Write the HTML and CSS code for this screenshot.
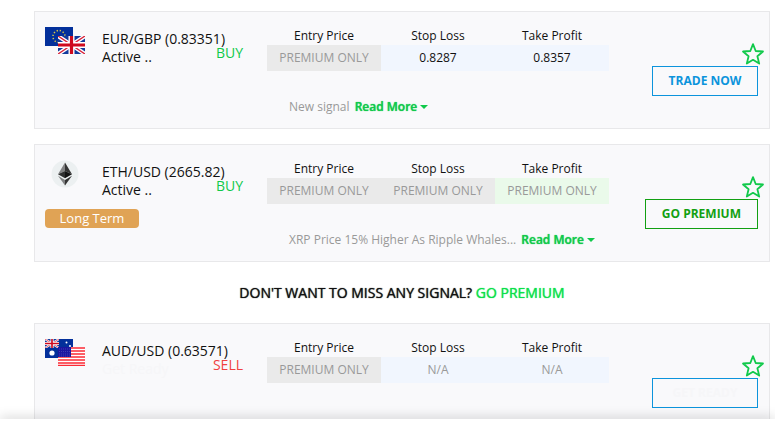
FILE: index.html
```html
<!DOCTYPE html>
<html lang="en">
<head>
    <meta charset="UTF-8">
    <meta name="viewport" content="width=device-width, initial-scale=1.0">
    <title>Forex Signals</title>
    <link rel="stylesheet" href="styles.css">
</head>
<body>
    <!-- shared icons -->
    <svg class="sprite" aria-hidden="true">
        <symbol id="star" viewBox="0 0 24 24">
            <path d="M12 2.2 L14.7 9 L22 9.5 L16.4 14.2 L18.2 21.6 L12 17.8 L5.8 21.6 L7.6 14.2 L2 9.5 L9.3 9 Z" fill="none" stroke="#11c94b" stroke-width="1.8" stroke-linejoin="round"/>
        </symbol>
        <symbol id="unionJack" viewBox="0 0 27 18" preserveAspectRatio="none">
            <path d="M0 0H27V18H0Z" fill="#123a9c"/>
            <path d="M0 0L27 18M27 0L0 18" stroke="#fff" stroke-width="4"/>
            <path d="M0 0L27 18M27 0L0 18" stroke="#d8223a" stroke-width="1.4"/>
            <path d="M13.5 0V18M0 9H27" stroke="#fff" stroke-width="6"/>
            <path d="M13.5 0V18M0 9H27" stroke="#cf0a1e" stroke-width="3.2"/>
        </symbol>
    </svg>

    <main class="signals">
        <article class="signal">
            <div class="info">
                <div class="icon">
                    <svg width="40" height="27" viewBox="0 0 40 27">
                        <path d="M0 0H28V19H0Z" fill="#03309b"/>
                        <circle cx="14" cy="9.5" r="6" fill="none" stroke="#d3c24a" stroke-width="1.5" stroke-dasharray="1.3 1.84"/>
                        <use href="#unionJack" x="13" y="9" width="27" height="18"/>
                    </svg>
                </div>
                <div class="pair">
                    <div class="name">EUR/GBP (0.83351)</div>
                    <div class="status">Active ..</div>
                </div>
                <span class="side buy">BUY</span>
            </div>
            <div class="details">
                <table class="prices">
                    <thead>
                        <tr><th>Entry Price</th><th>Stop Loss</th><th>Take Profit</th></tr>
                    </thead>
                    <tbody>
                        <tr><td class="locked">PREMIUM ONLY</td><td>0.8287</td><td>0.8357</td></tr>
                    </tbody>
                </table>
                <p class="note">New signal <a class="more" href="#">Read More</a></p>
            </div>
            <div class="actions">
                <button class="star" aria-label="Add to favorites"><svg width="24" height="24"><use href="#star"/></svg></button>
                <a class="btn" href="#">TRADE NOW</a>
            </div>
        </article>

        <article class="signal">
            <div class="info">
                <div class="icon coin">
                    <svg width="28" height="28" viewBox="0 0 28 28">
                        <circle cx="14" cy="14" r="13.5" fill="#ecf0f1"/>
                        <path d="M14 2.5L7 14.2L14 11Z" fill="#828384"/>
                        <path d="M14 2.5L21 14.2L14 11Z" fill="#343434"/>
                        <path d="M7 14.2L14 11V18.3Z" fill="#2f3030"/>
                        <path d="M21 14.2L14 11V18.3Z" fill="#131313"/>
                        <path d="M7 15.8L14 20V25.5Z" fill="#828384"/>
                        <path d="M21 15.8L14 20V25.5Z" fill="#343434"/>
                    </svg>
                </div>
                <div class="pair">
                    <div class="name">ETH/USD (2665.82)</div>
                    <div class="status">Active ..</div>
                </div>
                <span class="side buy">BUY</span>
                <span class="term">Long Term</span>
            </div>
            <div class="details">
                <table class="prices">
                    <thead>
                        <tr><th>Entry Price</th><th>Stop Loss</th><th>Take Profit</th></tr>
                    </thead>
                    <tbody>
                        <tr><td class="locked">PREMIUM ONLY</td><td class="locked">PREMIUM ONLY</td><td class="locked profit">PREMIUM ONLY</td></tr>
                    </tbody>
                </table>
                <p class="note">XRP Price 15% Higher As Ripple Whales... <a class="more" href="#">Read More</a></p>
            </div>
            <div class="actions">
                <button class="star" aria-label="Add to favorites"><svg width="24" height="24"><use href="#star"/></svg></button>
                <a class="btn premium" href="#">GO PREMIUM</a>
            </div>
        </article>

        <p class="promo">DON'T WANT TO MISS ANY SIGNAL? <a href="#">GO PREMIUM</a></p>

        <article class="signal">
            <div class="info">
                <div class="icon">
                    <svg width="40" height="27" viewBox="0 0 40 27">
                        <path d="M0 0H28V19H0Z" fill="#03309b"/>
                        <use href="#unionJack" width="14" height="9"/>
                        <g fill="#fff">
                            <circle cx="7" cy="14" r="2.6"/>
                            <circle cx="21.5" cy="3.5" r="1"/>
                            <circle cx="25" cy="7" r="1"/>
                        </g>
                        <path d="M13 8H40V27H13Z" fill="#fff"/>
                        <path d="M13 9H40M13 12H40M13 15H40M13 18H40M13 21H40M13 24H40M13 26.5H40" stroke="#fb2a35" stroke-width="1.7"/>
                        <path d="M13 8H26V18H13Z" fill="#1c16a0"/>
                        <path d="M14 10H26M14 12.5H26M14 15H26M14 17H26" stroke="#4a48b8" stroke-width="0.8" stroke-dasharray="1 1"/>
                    </svg>
                </div>
                <div class="pair">
                    <div class="name">AUD/USD (0.63571)</div>
                    <div class="status pending">Get Ready</div>
                </div>
                <span class="side sell">SELL</span>
            </div>
            <div class="details">
                <table class="prices">
                    <thead>
                        <tr><th>Entry Price</th><th>Stop Loss</th><th>Take Profit</th></tr>
                    </thead>
                    <tbody>
                        <tr><td class="locked">PREMIUM ONLY</td><td class="na">N/A</td><td class="na">N/A</td></tr>
                    </tbody>
                </table>
            </div>
            <div class="actions">
                <button class="star" aria-label="Add to favorites"><svg width="24" height="24"><use href="#star"/></svg></button>
                <a class="btn pending" href="#">GET READY</a>
            </div>
        </article>
    </main>
    <div class="bottomBar"></div>
</body>
</html>
```
FILE: styles.css
```css
* {
    box-sizing: border-box;
}
body {
    font-family: "Open Sans", Arial, sans-serif;
    font-size: 14px;
    margin: 0;
    height: 100vh;
    overflow: hidden;
    background: white;
    color: #111;
}
a {
    text-decoration: none;
}
.sprite {
    display: none;
}
.signals {
    padding: 11px 5px 0 34px;
}
.signal {
    display: grid;
    grid-template-columns: 232px 342px 1fr;
    min-height: 118px;
    margin-bottom: 15px;
    background: #f9f9fb;
    border: 1px solid #e8e8ea;
}

/* pair, status and direction */
.info {
    display: grid;
    grid-template-columns: 57px 1fr auto;
    align-content: start;
    padding: 15px 24px 0 10px;
}
.icon.coin {
    padding-left: 6px;
}
.icon svg {
    display: block;
}
.pair {
    padding-top: 3px;
    line-height: 18px;
    white-space: nowrap;
    width: 110px;
}
.side {
    padding-top: 17px;
    line-height: 18px;
    text-align: right;
}
.buy { color: #11c94b; }
.sell { color: #f04040; }
.status.pending { color: #f6f6f8; }
.term {
    grid-column: 1 / -1;
    justify-self: start;
    width: 94px;
    margin-top: 10px;
    border-radius: 4px;
    background: #e0a355;
    color: white;
    font-size: 13px;
    line-height: 19px;
    text-align: center;
}

/* price table */
.details {
    padding-top: 15px;
    font-size: 12px;
}
.prices {
    width: 100%;
    table-layout: fixed;
    border-collapse: collapse;
}
.prices th {
    padding: 0;
    font-weight: normal;
    line-height: 18px;
}
.prices td {
    padding: 0;
    line-height: 26px;
    text-align: center;
    background: #f1f6fe;
}
.prices .locked {
    background: #eaeaea;
    color: #999;
}
.prices .profit { background: #eafaea; }
.prices .na { color: #999; }
.note {
    margin: 27px 0 0 22px;
    line-height: 18px;
    color: #999;
}
.more {
    margin-left: 2px;
    color: #11c94b;
    font-weight: 600;
    text-shadow: 0 0 1px #11c94b;
}
.more::after {
    content: "";
    display: inline-block;
    margin-left: 3px;
    vertical-align: 2px;
    border: 4px solid transparent;
    border-top-color: #11c94b;
    border-bottom: 0;
}

/* star and button */
.actions {
    display: flex;
    flex-direction: column;
    align-items: flex-end;
    padding: 30px 4px 0 0;
}
.star {
    padding: 0;
    border: 0;
    background: none;
    cursor: pointer;
}
.star svg {
    display: block;
}
.btn {
    min-width: 106px;
    margin-right: 7px;
    padding: 0 15px;
    border: 1px solid #0c94dc;
    color: #0c94dc;
    font-size: 12px;
    font-weight: bold;
    line-height: 28px;
    text-align: center;
}
.btn.premium {
    padding: 0 16px;
    border-color: #12a012;
    color: #12a012;
}
.btn.pending {
    color: #f6f6f8;
}

.promo {
    margin: 0 0 20px;
    padding-top: 6px;
    text-align: center;
    line-height: 20px;
    text-shadow: 0 0 1px currentColor;
}
.promo a {
    color: #0be04b;
    text-shadow: 0 0 1px currentColor;
}
.bottomBar {
    position: fixed;
    left: 0;
    right: 0;
    bottom: 0;
    height: 3px;
    background: white;
    box-shadow: 0 0 12px rgba(0, 0, 0, 0.4);
}
```
